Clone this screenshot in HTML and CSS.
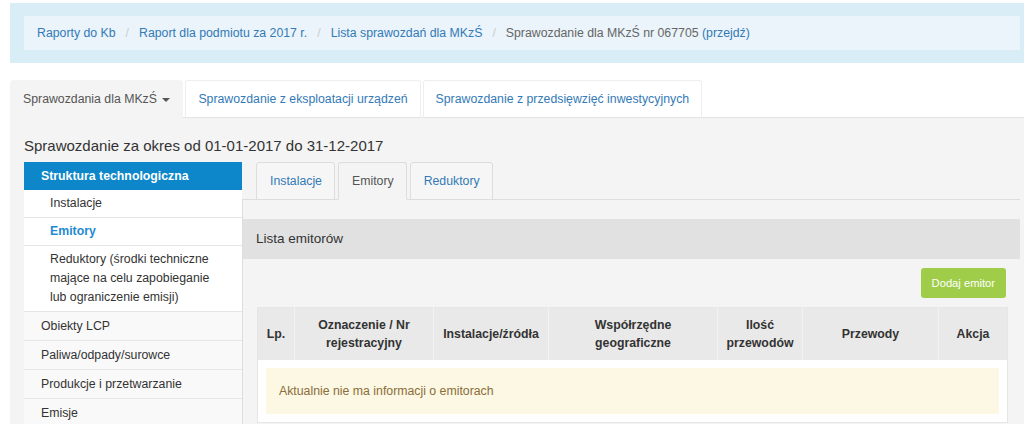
FILE: index.html
```html
<!DOCTYPE html>
<html lang="pl">
<head>
  <meta charset="UTF-8" />
  <title>Sprawozdanie dla MKzŚ nr 067705</title>
  <link rel="stylesheet" href="styles.css">
</head>
<body>
  <div class="info-box">
    <ol class="breadcrumb">
      <li><a href="#">Raporty do Kb</a></li>
      <li><a href="#">Raport dla podmiotu za 2017 r.</a></li>
      <li><a href="#">Lista sprawozdań dla MKzŚ</a></li>
      <li class="current">Sprawozdanie dla MKzŚ nr 067705 <a href="#">(przejdź)</a></li>
    </ol>
  </div>

  <ul class="top-tabs">
    <li class="active"><a href="#">Sprawozdania dla MKzŚ <span class="caret"></span></a></li>
    <li><a href="#">Sprawozdanie z eksploatacji urządzeń</a></li>
    <li><a href="#">Sprawozdanie z przedsięwzięć inwestycyjnych</a></li>
  </ul>

  <div class="report">
    <h4 class="report-title">Sprawozdanie za okres od 01-01-2017 do 31-12-2017</h4>
    <div class="report-body">
      <ul class="side-menu">
        <li class="group-head">Struktura technologiczna</li>
        <li class="sub"><a href="#">Instalacje</a></li>
        <li class="sub current"><a href="#">Emitory</a></li>
        <li class="sub"><a href="#">Reduktory (środki techniczne mające na celu zapobieganie lub ograniczenie emisji)</a></li>
        <li class="top"><a href="#">Obiekty LCP</a></li>
        <li class="top"><a href="#">Paliwa/odpady/surowce</a></li>
        <li class="top"><a href="#">Produkcje i przetwarzanie</a></li>
        <li class="top"><a href="#">Emisje</a></li>
      </ul>

      <section class="content">
        <ul class="sub-tabs">
          <li><a href="#">Instalacje</a></li>
          <li class="active"><a href="#">Emitory</a></li>
          <li><a href="#">Reduktory</a></li>
        </ul>
        <div class="tab-pane">
          <div class="panel">
            <div class="panel-heading">Lista emitorów</div>
            <div class="panel-body">
              <div class="actions">
                <button class="btn-add">Dodaj emitor</button>
              </div>
              <table class="list">
                <colgroup>
                  <col style="width:37px">
                  <col style="width:139px">
                  <col style="width:115px">
                  <col style="width:169px">
                  <col style="width:85px">
                  <col style="width:136px">
                  <col style="width:69px">
                </colgroup>
                <thead>
                  <tr>
                    <th>Lp.</th>
                    <th>Oznaczenie / Nr rejestracyjny</th>
                    <th>Instalacje/źródła</th>
                    <th class="wide-pad">Współrzędne geograficzne</th>
                    <th>Ilość przewodów</th>
                    <th>Przewody</th>
                    <th>Akcja</th>
                  </tr>
                </thead>
                <tbody>
                  <tr>
                    <td colspan="7">
                      <div class="alert-empty">Aktualnie nie ma informacji o emitorach</div>
                    </td>
                  </tr>
                </tbody>
              </table>
            </div>
          </div>
        </div>
      </section>
    </div>
  </div>
</body>
</html>
```

FILE: styles.css
```css
body {
  margin: 3px 0 0 10px;
  font-family: "Liberation Sans", Arial, sans-serif;
  font-size: 12.3px;
  line-height: 18px;
  color: #333;
  background: #fff;
  overflow: hidden;
}

a {
  color: #337ab7;
  text-decoration: none;
}

ul, ol {
  list-style: none;
  margin: 0;
  padding: 0;
}

/* breadcrumb box */
.info-box {
  background: #d9edf7;
  padding: 13px 4px 13px 14px;
}

.breadcrumb {
  display: flex;
  background: #eaf4fa;
  padding: 8px 13px;
}

.breadcrumb li + li::before {
  content: "/";
  color: #ccc;
  margin: 0 10px;
}

.breadcrumb .current {
  color: #666;
}

/* top tabs */
.top-tabs {
  display: flex;
  margin-top: 17px;
  border-bottom: 1px solid #e3e3e3;
}

.top-tabs li {
  margin-right: 2px;
  margin-bottom: -1px;
  border: 1px solid #eee;
  border-bottom-color: #e3e3e3;
  border-radius: 3px 3px 0 0;
  background: #fff;
}

.top-tabs li a {
  display: block;
  padding: 9px 12px;
}

.top-tabs li.active {
  background: #f4f4f4;
  border-color: #f4f4f4;
}

.top-tabs li.active a {
  color: #555;
}

.caret {
  display: inline-block;
  margin-left: 2px;
  vertical-align: middle;
  border-top: 4px solid #555;
  border-left: 4px solid transparent;
  border-right: 4px solid transparent;
}

/* grey report panel */
.report {
  background: #f4f4f4;
  padding: 18px 4px 0 14px;
  height: 400px;
}

.report-title {
  margin: 0 0 6px;
  font-size: 15px;
  font-weight: normal;
  line-height: 20px;
}

.report-body {
  display: flex;
}

/* side menu */
.side-menu {
  width: 218px;
  flex-shrink: 0;
}

.side-menu li {
  line-height: 19px;
  border-bottom: 1px solid #e6e6e6;
}

.side-menu li a {
  display: block;
  color: #333;
}

.side-menu .group-head {
  background: #0d87c9;
  color: #fff;
  font-weight: bold;
  padding: 5px 10px 4px 17px;
  border-bottom: none;
}

.side-menu .sub {
  background: #fff;
}

.side-menu .sub a {
  padding: 4px 18px 4px 26px;
}

.side-menu .sub.current a {
  color: #1f8ad1;
  font-weight: bold;
}

.side-menu .top {
  background: #f9f9f9;
}

.side-menu .top a {
  padding: 5px 10px 4px 17px;
}

/* right content */
.content {
  flex: 1;
  min-width: 0;
}

.sub-tabs {
  display: flex;
  padding-left: 14px;
  border-bottom: 1px solid #ddd;
}

.sub-tabs li {
  margin-right: 3px;
  margin-bottom: -1px;
  border: 1px solid #ddd;
  border-radius: 3px 3px 0 0;
  background: #f6f6f6;
}

.sub-tabs li a {
  display: block;
  padding: 9px 12px 9px 13px;
}

.sub-tabs li.active {
  background: #f4f4f4;
  border-bottom-color: #f4f4f4;
}

.sub-tabs li.active a {
  color: #555;
}

.tab-pane {
  border-left: 1px solid #ddd;
  padding-top: 19px;
  min-height: 240px;
}

.panel-heading {
  background: #e1e1e1;
  padding: 11px 13px;
  font-size: 13.5px;
}

.panel-body {
  padding: 9px 14px;
}

.actions {
  display: flex;
  justify-content: flex-end;
  margin-bottom: 9px;
}

.btn-add {
  font-family: "Liberation Sans", Arial, sans-serif;
  font-size: 11.2px;
  line-height: 18px;
  padding: 6px 11px;
  color: #fff;
  background: #9fcd4a;
  border: none;
  border-radius: 3px;
}

/* table */
.list {
  width: 100%;
  table-layout: fixed;
  border-collapse: collapse;
  background: #fff;
  border: 1px solid #e6e6e6;
}

.list th {
  background: #e9e9e9;
  border-left: 1px solid #f2f2f2;
  padding: 8px 4px;
  font-weight: bold;
  text-align: center;
  vertical-align: middle;
}

.list th:first-child {
  border-left: none;
}

.list th.wide-pad {
  padding: 8px 14px;
}

.list td {
  padding: 8px;
}

.alert-empty {
  background: #fcf8e3;
  color: #8a6d3b;
  padding: 14px 13px;
}
```
